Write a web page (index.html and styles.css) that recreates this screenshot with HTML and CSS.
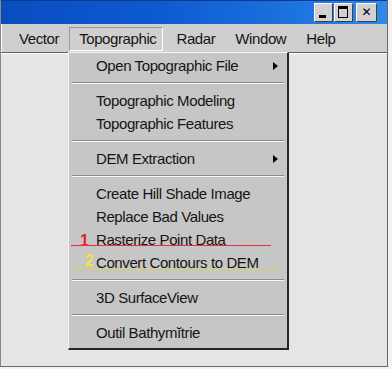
FILE: index.html
```html
<!DOCTYPE html>
<html>
<head>
<meta charset="utf-8">
<link rel="stylesheet" href="styles.css">
</head>
<body>
<div class="window">
  <div class="caption">
    <div class="tbtn"><span class="g-min"></span></div>
    <div class="tbtn"><span class="g-max"></span></div>
    <div class="tbtn tbtn-close"><span class="g-close">✕</span></div>
  </div>
  <div class="menubar">
    <span class="mitem">Vector</span>
    <span class="mitem active">Topographic</span>
    <span class="mitem">Radar</span>
    <span class="mitem">Window</span>
    <span class="mitem">Help</span>
  </div>
  <div class="client"></div>
  <div class="dropdown">
    <div class="item"><span>Open Topographic File</span><span class="arrow"></span></div>
    <div class="sep"></div>
    <div class="item"><span>Topographic Modeling</span></div>
    <div class="item"><span>Topographic Features</span></div>
    <div class="sep"></div>
    <div class="item"><span>DEM Extraction</span><span class="arrow"></span></div>
    <div class="sep"></div>
    <div class="item"><span>Create Hill Shade Image</span></div>
    <div class="item"><span>Replace Bad Values</span></div>
    <div class="item mark"><span class="num num-red">1</span><span>Rasterize Point Data</span><span class="line line-red"></span></div>
    <div class="item mark"><span class="num num-yellow">2</span><span>Convert Contours to DEM</span><span class="line line-yellow"></span></div>
    <div class="sep"></div>
    <div class="item"><span>3D SurfaceView</span></div>
    <div class="sep"></div>
    <div class="item"><span>Outil Bathymĭtrie</span></div>
  </div>
</div>
</body>
</html>
```
FILE: styles.css
```css
html, body {
  margin: 0;
  padding: 0;
  background-color: #f2f2f2;
}
body {
  width: 392px;
  height: 369px;
  overflow: hidden;
  font-family: "Liberation Sans", Arial, sans-serif;
  font-size: 15px;
  letter-spacing: -0.4px;
  color: #151515;
}
.window {
  position: relative;
  width: 386px;
  height: 366px;
  border-left: 1px solid #8a8a8a;
  border-right: 1px solid #6a6a6a;
  border-bottom: 1px solid #6a6a6a;
  display: flex;
  flex-direction: column;
  background-color: #e6e4e6;
}
.caption {
  flex: none;
  height: 24px;
  box-sizing: border-box;
  border-top: 1px solid #0a3a90;
  background-color: #1060d8;
  background-image: linear-gradient(90deg, #0a4cc0 0%, #0d5ad0 40%, #1c72de 75%, #3188ea 100%);
  display: flex;
  justify-content: flex-end;
  align-items: flex-start;
  padding: 2px 10px 0 0;
  gap: 1px;
}
.tbtn {
  position: relative;
  width: 17px;
  height: 17px;
  background-color: #d2d0d0;
  border-top: 1px solid #ffffff;
  border-left: 1px solid #ffffff;
  border-right: 1px solid #404040;
  border-bottom: 1px solid #404040;
}
.tbtn-close {
  margin-left: 2px;
  width: 19px;
}
.g-min {
  position: absolute;
  left: 4px;
  bottom: 3px;
  width: 7px;
  height: 3px;
  background-color: #000;
}
.g-max {
  position: absolute;
  left: 3px;
  top: 2px;
  width: 8px;
  height: 8px;
  border: 1px solid #000;
  border-top-width: 3px;
}
.g-close {
  position: absolute;
  left: 0;
  right: 0;
  top: 0;
  line-height: 17px;
  text-align: center;
  font-family: "DejaVu Sans", sans-serif;
  font-size: 12px;
  font-weight: bold;
  color: #000;
  letter-spacing: 0;
}
.menubar {
  flex: none;
  height: 28px;
  background-color: #cfcfcf;
  display: flex;
  align-items: center;
  padding-left: 7px;
  border-left: 1px solid #ffffff;
  box-sizing: border-box;
}
.mitem {
  padding: 0 9px;
  line-height: 22px;
  height: 22px;
  border: 1px solid transparent;
  margin-top: 1px;
}
.mitem.active {
  border-top-color: #9a9a9a;
  border-left-color: #9a9a9a;
  border-right-color: #ffffff;
  border-bottom-color: #ffffff;
  padding-right: 6px;
  margin-right: 3px;
}
.client {
  flex: 1;
  border-top: 1px solid #606060;
  box-shadow: inset 0 1px 0 #ffffff;
}
.dropdown {
  position: absolute;
  left: 67px;
  top: 52px;
  width: 218px;
  height: 294px;
  background-color: #c6c6c6;
  border-top: 1px solid #f4f4f4;
  border-left: 1px solid #f4f4f4;
  border-right: 2px solid #262626;
  border-bottom: 2px solid #262626;
  padding-top: 1px;
}
.item {
  position: relative;
  height: 23px;
  line-height: 23px;
  display: flex;
  justify-content: space-between;
  align-items: center;
  padding: 0 9px 0 27px;
  white-space: nowrap;
}
.arrow {
  width: 0;
  height: 0;
  border-left: 5px solid #000;
  border-top: 4px solid transparent;
  border-bottom: 4px solid transparent;
}
.sep {
  height: 0;
  margin: 5px 3px;
  border-top: 1px solid #8c8c8c;
  border-bottom: 1px solid #f8f8f8;
}
.num {
  position: absolute;
  font-weight: bold;
  font-size: 16px;
  line-height: 16px;
  letter-spacing: 0;
}
.num-red {
  left: 11px;
  top: 5px;
  color: #e41c34;
}
.num-yellow {
  left: 16px;
  top: 2px;
  color: #f2e440;
}
.line {
  position: absolute;
  left: 2px;
  height: 1px;
}
.line-red {
  top: 17px;
  width: 200px;
  background-color: #e8303c;
}
.line-yellow {
  top: 18px;
  width: 207px;
  background-color: #d8d060;
}
```
